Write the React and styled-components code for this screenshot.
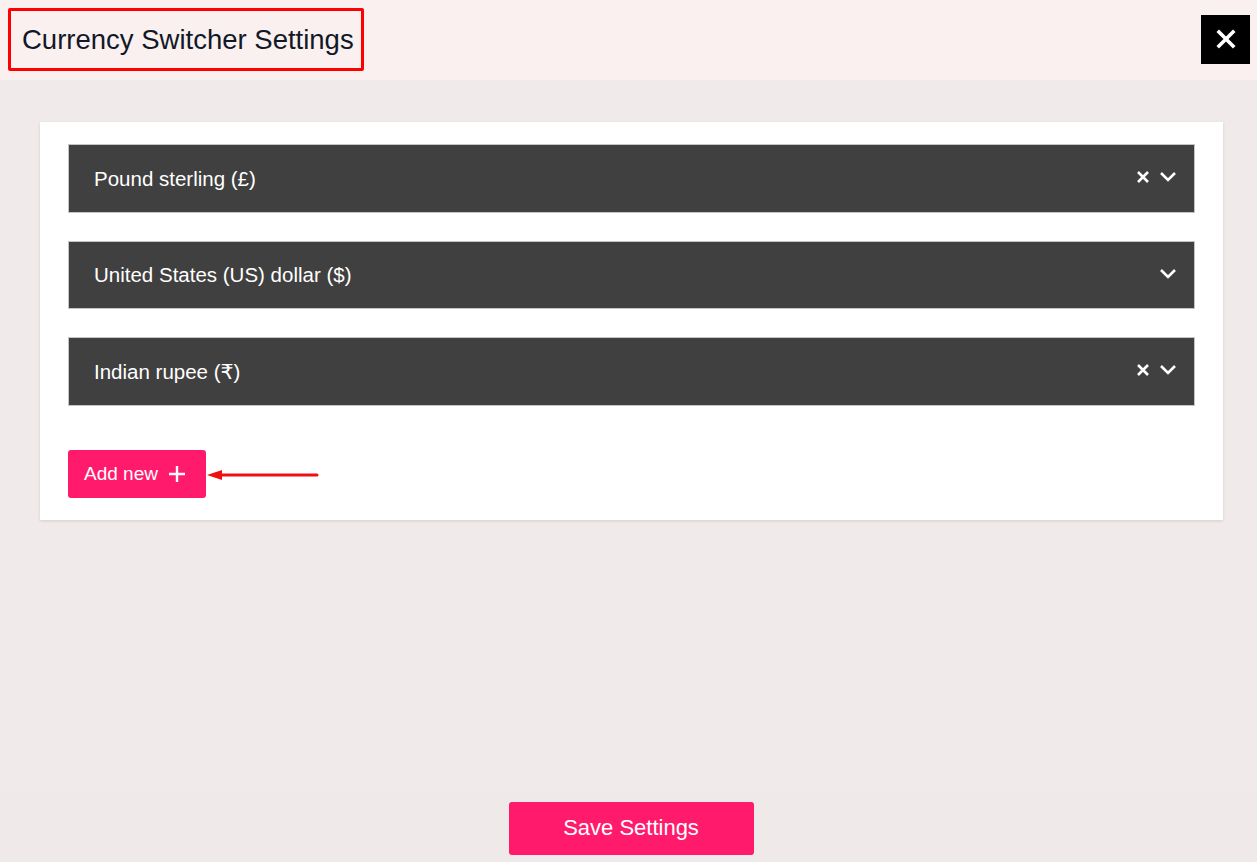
import React from "react";
import styled, { createGlobalStyle } from "styled-components";

const Global = createGlobalStyle`
  html, body { margin: 0; padding: 0; }
  body {
    background: #f0eaeb;
    font-family: "Liberation Sans", Arial, "DejaVu Sans", sans-serif;
  }
`;

const currencies = [
  { name: "Pound sterling (£)", removable: true },
  { name: "United States (US) dollar ($)", removable: false },
  { name: "Indian rupee (₹)", removable: true },
];

export default function App() {
  return (
    <>
      <Global />
      <Page>
        <Header>
          <TitleBox>Currency Switcher Settings</TitleBox>
          <CloseButton aria-label="Close">
            <svg width="20" height="20" viewBox="0 0 20 20">
              <path d="M3 3 L17 17 M17 3 L3 17" stroke="#fff" strokeWidth="3.6" strokeLinecap="square" />
            </svg>
          </CloseButton>
        </Header>
        <Main>
          <Card>
            {currencies.map((c) => (
              <Row key={c.name}>
                <RowLabel>{c.name}</RowLabel>
                <RowIcons>
                  {c.removable && (
                    <svg width="14" height="14" viewBox="0 0 14 14">
                      <path d="M2 2 L12 12 M12 2 L2 12" stroke="#fff" strokeWidth="2.6" />
                    </svg>
                  )}
                  <svg width="18" height="12" viewBox="0 0 18 12">
                    <path d="M2 2 L9 9 L16 2" stroke="#fff" strokeWidth="2.6" fill="none" />
                  </svg>
                </RowIcons>
              </Row>
            ))}
            <AddLine>
              <AddButton>
                Add new
                <svg width="16" height="16" viewBox="0 0 16 16">
                  <path d="M8 0 V16 M0 8 H16" stroke="#fff" strokeWidth="2.4" />
                </svg>
              </AddButton>
              <Arrow width="114" height="12" viewBox="0 0 114 12">
                <path d="M0 6 L15 1 L15 11 Z" fill="#ee1111" />
                <path d="M12 6 H110" stroke="#ee1111" strokeWidth="3" strokeLinecap="round" />
              </Arrow>
            </AddLine>
          </Card>
        </Main>
        <Footer>
          <SaveButton>Save Settings</SaveButton>
        </Footer>
      </Page>
    </>
  );
}

const Page = styled.div`
  display: flex;
  flex-direction: column;
  height: 862px;
`;

const Header = styled.header`
  height: 80px;
  background: #faf0ef;
  display: flex;
  align-items: center;
  justify-content: space-between;
  padding: 0 7px 0 8px;
`;

const TitleBox = styled.h1`
  margin: 0;
  box-sizing: border-box;
  height: 63px;
  width: 356px;
  border: 3px solid #ff0000;
  border-radius: 2px;
  display: flex;
  align-items: center;
  padding-left: 11px;
  font-weight: 400;
  font-size: 27.5px;
  color: #111827;
  margin-top: -1px;
`;

const CloseButton = styled.button`
  width: 49px;
  height: 49px;
  background: #000;
  border: none;
  display: flex;
  align-items: center;
  justify-content: center;
  padding: 0;
  margin-top: -2px;
  cursor: pointer;
`;

const Main = styled.main`
  flex: 1;
  padding: 42px 34px 0 40px;
`;

const Card = styled.section`
  background: #fff;
  box-shadow: 0 1px 3px rgba(0, 0, 0, 0.12);
  padding: 22px 28px 22px 28px;
  display: flex;
  flex-direction: column;
  gap: 28px;
`;

const Row = styled.div`
  box-sizing: border-box;
  height: 68.5px;
  background: #404040;
  border: 1px solid #c4c4c4;
  display: flex;
  align-items: center;
  justify-content: space-between;
  padding: 0 17px 0 25px;
`;

const RowLabel = styled.span`
  color: #fff;
  font-size: 20.5px;
  margin-top: 1px;
`;

const RowIcons = styled.div`
  display: flex;
  align-items: center;
  gap: 9px;
  margin-top: -2px;
`;

const AddLine = styled.div`
  display: flex;
  align-items: center;
  margin-top: 16px;
`;

const AddButton = styled.button`
  box-sizing: border-box;
  height: 48px;
  width: 138px;
  background: #ff1a6b;
  color: #fff;
  border: none;
  border-radius: 3px;
  font-family: inherit;
  font-size: 19px;
  display: flex;
  align-items: center;
  gap: 11px;
  padding: 0 0 0 16px;
  cursor: pointer;
`;

const Arrow = styled.svg`
  margin-left: 1px;
  margin-top: 2px;
`;

const Footer = styled.footer`
  height: 70px;
  background: #efe9e9;
  display: flex;
  justify-content: center;
  padding: 10px 0 0 5px;
  box-sizing: border-box;
`;

const SaveButton = styled.button`
  width: 245px;
  height: 53px;
  background: #ff1a6b;
  color: #fff;
  border: none;
  border-radius: 3px;
  font-family: inherit;
  font-size: 22px;
  padding-bottom: 3px;
  cursor: pointer;
`;
